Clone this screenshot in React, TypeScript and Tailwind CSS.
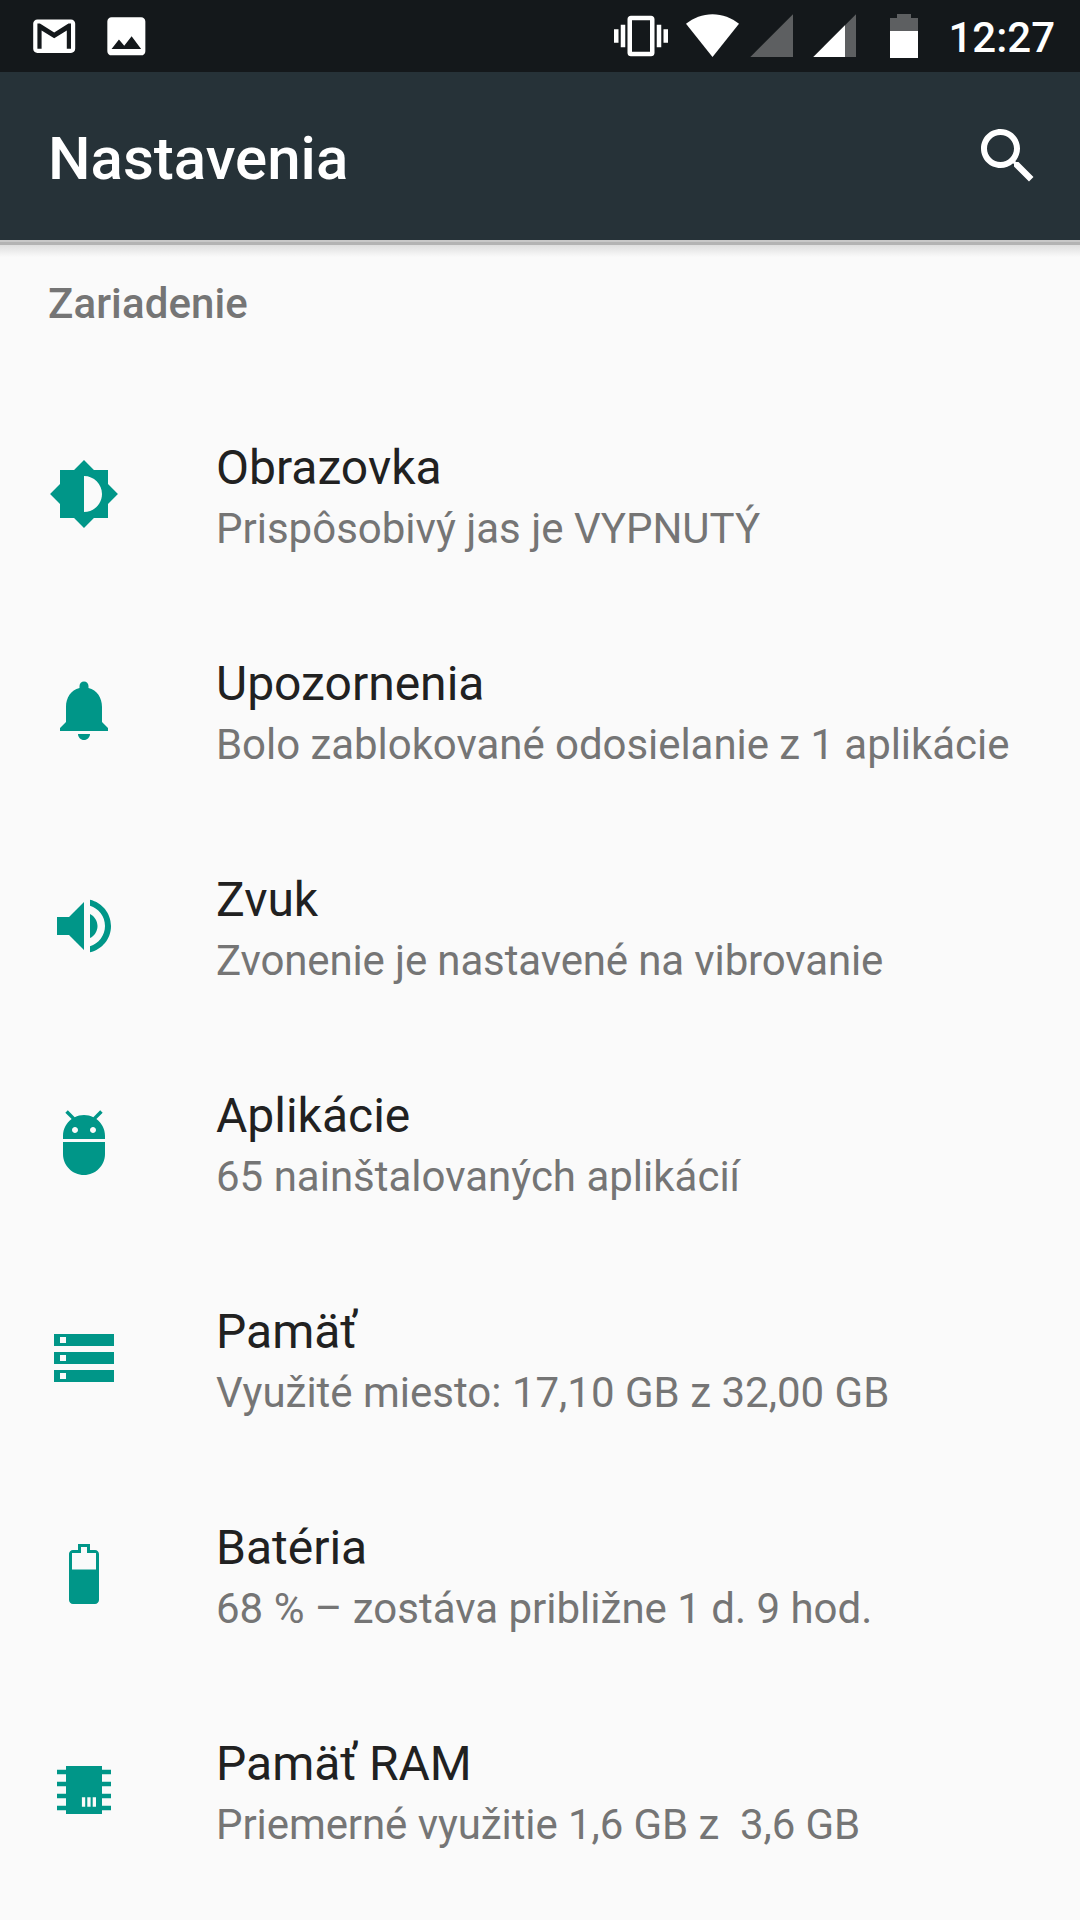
import type { ReactNode } from "react";

interface SettingsItem {
  id: string;
  title: string;
  summary: string;
  tracking?: string;
  icon: ReactNode;
}

const items: SettingsItem[] = [
  {
    id: "display",
    title: "Obrazovka",
    summary: "Prispôsobivý jas je VYPNUTÝ",
    icon: (
      <path d="M20 15.31L23.31 12 20 8.69V4h-4.69L12 .69 8.69 4H4v4.69L.69 12 4 15.31V20h4.69L12 23.31 15.31 20H20v-4.69zM12 18V6c3.31 0 6 2.69 6 6s-2.69 6-6 6z" />
    ),
  },
  {
    id: "notifications",
    title: "Upozornenia",
    summary: "Bolo zablokované odosielanie z 1 aplikácie",
    tracking: "tracking-[-0.05px]",
    icon: (
      <path d="M12 22c1.1 0 2-.9 2-2h-4c0 1.1.89 2 2 2zm6-6v-5c0-3.07-1.64-5.64-4.5-6.32V4c0-.83-.67-1.5-1.5-1.5s-1.5.67-1.5 1.5v.68C7.63 5.36 6 7.92 6 11v5l-2 2v1h16v-1l-2-2z" />
    ),
  },
  {
    id: "sound",
    title: "Zvuk",
    summary: "Zvonenie je nastavené na vibrovanie",
    tracking: "tracking-[-0.13px]",
    icon: (
      <path d="M3 9v6h4l5 5V4L7 9H3zm13.5 3c0-1.77-1.02-3.29-2.5-4.03v8.05c1.48-.73 2.5-2.25 2.5-4.02zM14 3.23v2.06c2.89.86 5 3.54 5 6.71s-2.11 5.85-5 6.71v2.06c4.01-.91 7-4.49 7-8.77s-2.99-7.86-7-8.77z" />
    ),
  },
  {
    id: "apps",
    title: "Aplikácie",
    summary: "65 nainštalovaných aplikácií",
    icon: (
      <path d="M5 16c0 3.87 3.13 7 7 7s7-3.13 7-7v-4H5v4zM16.12 4.37l2.1-2.1-.82-.83-2.3 2.31C14.16 3.28 13.12 3 12 3s-2.16.28-3.09.75L6.6 1.44l-.82.83 2.1 2.1C6.14 5.64 5 7.68 5 10v1h14v-1c0-2.32-1.14-4.36-2.88-5.63zM9 9c-.55 0-1-.45-1-1s.45-1 1-1 1 .45 1 1-.45 1-1 1zm6 0c-.55 0-1-.45-1-1s.45-1 1-1 1 .45 1 1-.45 1-1 1z" />
    ),
  },
  {
    id: "storage",
    title: "Pamäť",
    summary: "Využité miesto: 17,10 GB z 32,00 GB",
    icon: (
      <path d="M2 20h20v-4H2v4zm2-3h2v2H4v-2zM2 4v4h20V4H2zm4 3H4V5h2v2zm-4 7h20v-4H2v4zm2-3h2v2H4v-2z" />
    ),
  },
  {
    id: "battery",
    title: "Batéria",
    summary: "68 % – zostáva približne 1 d. 9 hod.",
    icon: (
      <path
        fillRule="evenodd"
        d="M15.67 4H14V2h-4v2H8.33C7.6 4 7 4.6 7 5.33v15.33C7 21.4 7.6 22 8.33 22h7.33c.74 0 1.34-.6 1.34-1.33V5.33C17 4.6 16.4 4 15.67 4zM8 10.5V5h3V3h2v2h3v5.5z"
      />
    ),
  },
  {
    id: "memory",
    title: "Pamäť RAM",
    summary: "Priemerné využitie 1,6 GB z  3,6 GB",
    tracking: "tracking-[-0.08px]",
    icon: (
      <path
        fillRule="evenodd"
        d="M21 6.77V5.23h-3V4H6v1.23H3v1.54h3v2.46H3v1.54h3v2.46H3v1.54h3v2.46H3v1.54h3V20h12v-1.23h3v-1.54h-3v-2.46h3v-1.54h-3v-2.46h3V9.23h-3V6.77zM12.4 17.6h-1.1v-3.2h1.1zM14.2 17.6h-1.1v-3.2h1.1zM16 17.6h-1.1v-3.2H16z"
      />
    ),
  },
];

function StatusBar() {
  return (
    <div className="flex h-[72px] items-center justify-between bg-[#14181b] pl-[28.8px] pr-[25px] text-white">
      {/* Notifications */}
      <div className="flex items-center gap-[21.4px]">
        <svg viewBox="0 0 24 24" className="size-[50.4px] fill-current">
          <path d="M20 4H4c-1.1 0-2 .9-2 2v12c0 1.1.9 2 2 2h16c1.1 0 2-.9 2-2V6c0-1.1-.9-2-2-2zm0 14h-2V9.25L12 13 6 9.25V18H4V6h1.2l6.8 4.25L18.8 6H20v12z" />
        </svg>
        <svg viewBox="0 0 24 24" className="size-[50.7px] fill-current">
          <path d="M21 19V5c0-1.1-.9-2-2-2H5c-1.1 0-2 .9-2 2v14c0 1.1.9 2 2 2h14c1.1 0 2-.9 2-2zM8.5 13.5l2.5 3.01L14.5 12l4.5 6H5l3.5-4.5z" />
        </svg>
      </div>

      {/* System icons */}
      <div className="flex items-center">
        <svg viewBox="0 0 24 24" className="mr-[18px] size-[54px] fill-current">
          <path d="M0 15h2V9H0v6zm3 2h2V7H3v10zm19-8v6h2V9h-2zm-3 8h2V7h-2v10zM16.5 3h-9C6.67 3 6 3.67 6 4.5v15c0 .83.67 1.5 1.5 1.5h9c.83 0 1.5-.67 1.5-1.5v-15c0-.83-.67-1.5-1.5-1.5zM16 19H8V5h8v14z" />
        </svg>
        <svg viewBox="0 0 53 44" className="mr-[11px] h-[44px] w-[53px] fill-current">
          <path d="M0 9.8C7.5 3.8 16.5 0.2 26.5 0.2S45.5 3.8 53 9.8L26.5 43z" />
        </svg>
        <svg viewBox="0 0 43 44" className="mr-5 h-[44px] w-[43px]">
          <path d="M0.3 43H43V0.3z" fill="#5d5f61" />
        </svg>
        <svg viewBox="0 0 43 44" className="mr-[34px] h-[44px] w-[43px]">
          <path d="M0.3 43H43V0.3z" fill="#5d5f61" />
          <path d="M0.3 43H32V11.3z" fill="#fff" />
        </svg>
        <svg viewBox="0 0 28 44" className="mr-[30px] h-[44px] w-[28px]">
          <path d="M0 17V4h7V0h14v4h7v13z" fill="#5d5f61" />
          <path d="M0 17h28v27H0z" fill="#fff" />
        </svg>
        <span className="mt-[3px] text-[42px] leading-none font-medium">12:27</span>
      </div>
    </div>
  );
}

function AppBar() {
  return (
    <header className="flex h-[168px] items-center justify-between bg-[#263238] pr-9 pl-12 text-white">
      <h1 className="mt-1.5 text-[60px] leading-none font-medium">Nastavenia</h1>
      <svg viewBox="0 0 24 24" className="size-[72px] fill-current">
        <path d="M15.5 14h-.79l-.28-.27C15.41 12.59 16 11.11 16 9.5 16 5.91 13.09 3 9.5 3S3 5.91 3 9.5 5.91 16 9.5 16c1.61 0 3.09-.59 4.23-1.57l.27.28v.79l5 4.99L20.49 19l-4.99-5zm-6 0C7.01 14 5 11.99 5 9.5S7.01 5 9.5 5 14 7.01 14 9.5 11.99 14 9.5 14z" />
      </svg>
    </header>
  );
}

function SettingsRow({ item }: { item: SettingsItem }) {
  return (
    <li className="flex h-[216px] items-center gap-24 pl-12">
      <svg viewBox="0 0 24 24" className="size-[72px] shrink-0 fill-[#009688]">
        {item.icon}
      </svg>
      <div className="pt-1.5 whitespace-pre">
        <div className="text-[48px] leading-[64px] text-[#212121]">{item.title}</div>
        <div className={`text-[42px] leading-[58px] text-[#757575] ${item.tracking ?? ""}`}>
          {item.summary}
        </div>
      </div>
    </li>
  );
}

export default function App() {
  return (
    <div className="flex h-[1920px] w-[1080px] flex-col overflow-hidden bg-[#fafafa] font-['Roboto',sans-serif]">
      <StatusBar />
      <AppBar />
      {/* Shadow under the app bar */}
      <div className="h-0.5 bg-[#c8c8c8]" />
      <div className="h-[3px] bg-[#b3b3b3]" />
      <div className="h-3 bg-linear-to-b from-[#dedede] to-[#fafafa]" />
      <h2 className="h-[129px] pt-[23px] pl-12 text-[42px] leading-[48px] font-medium tracking-[0.1px] text-[#757575]">
        Zariadenie
      </h2>
      <ul>
        {items.map((item) => (
          <SettingsRow key={item.id} item={item} />
        ))}
      </ul>
    </div>
  );
}
